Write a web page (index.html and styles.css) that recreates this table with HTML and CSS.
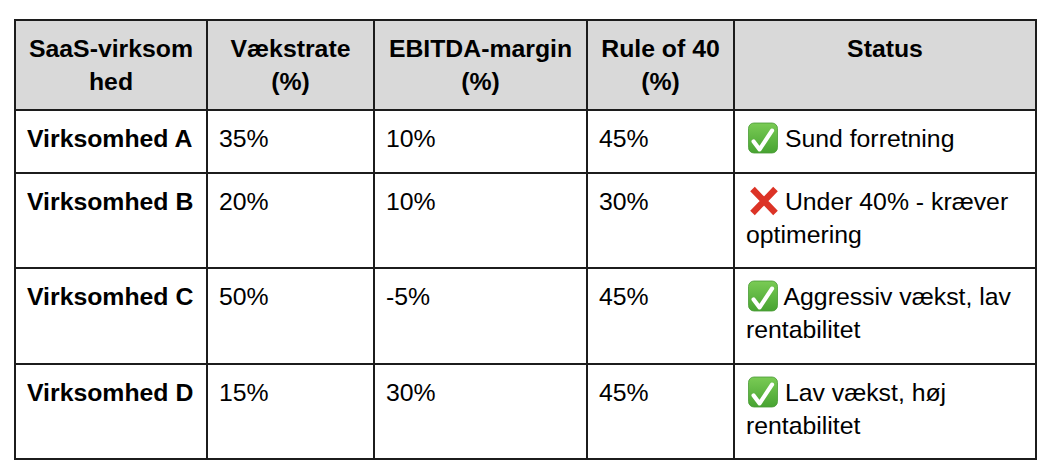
FILE: index.html
```html
<!DOCTYPE html>
<html lang="da">
<head>
<meta charset="utf-8">
<title>Rule of 40</title>
<link rel="stylesheet" href="styles.css">
</head>
<body>
<div class="page">
<table class="grid">
  <colgroup>
    <col class="c-name">
    <col class="c-growth">
    <col class="c-ebitda">
    <col class="c-rule">
    <col class="c-status">
  </colgroup>
  <thead>
    <tr>
      <th class="break">SaaS-virksomhed</th>
      <th>Vækstrate (%)</th>
      <th>EBITDA-margin (%)</th>
      <th>Rule of 40 (%)</th>
      <th>Status</th>
    </tr>
  </thead>
  <tbody>
    <tr>
      <td class="name">Virksomhed A</td>
      <td>35%</td>
      <td>10%</td>
      <td>45%</td>
      <td><svg class="emoji" viewBox="0 0 32 32" width="32" height="32" aria-hidden="true"><defs><linearGradient id="g1" x1="0" y1="0" x2="0" y2="1"><stop offset="0" stop-color="#7acb55"/><stop offset="1" stop-color="#47a331"/></linearGradient></defs><rect x="2.5" y="1" width="29" height="30" rx="5.5" fill="url(#g1)" stroke="#4a9a36" stroke-width="0.8"/><path d="M7.6 19.4 L13.6 27.4 L26 8.6" fill="none" stroke="#fff" stroke-width="4.2" stroke-linecap="round" stroke-linejoin="round"/></svg> Sund forretning</td>
    </tr>
    <tr>
      <td class="name">Virksomhed B</td>
      <td>20%</td>
      <td>10%</td>
      <td>30%</td>
      <td><svg class="emoji" viewBox="0 0 32 32" width="32" height="32" aria-hidden="true"><path d="M6.5 4 L29.5 28 M29.5 4 L6.5 28" fill="none" stroke="#dc3326" stroke-width="6.4" stroke-linecap="butt"/></svg> Under 40% - kræver optimering</td>
    </tr>
    <tr>
      <td class="name">Virksomhed C</td>
      <td>50%</td>
      <td>-5%</td>
      <td>45%</td>
      <td><svg class="emoji" viewBox="0 0 32 32" width="32" height="32" aria-hidden="true"><defs><linearGradient id="g2" x1="0" y1="0" x2="0" y2="1"><stop offset="0" stop-color="#7acb55"/><stop offset="1" stop-color="#47a331"/></linearGradient></defs><rect x="2.5" y="1" width="29" height="30" rx="5.5" fill="url(#g2)" stroke="#4a9a36" stroke-width="0.8"/><path d="M7.6 19.4 L13.6 27.4 L26 8.6" fill="none" stroke="#fff" stroke-width="4.2" stroke-linecap="round" stroke-linejoin="round"/></svg> Aggressiv vækst, lav rentabilitet</td>
    </tr>
    <tr>
      <td class="name">Virksomhed D</td>
      <td>15%</td>
      <td>30%</td>
      <td>45%</td>
      <td><svg class="emoji" viewBox="0 0 32 32" width="32" height="32" aria-hidden="true"><defs><linearGradient id="g3" x1="0" y1="0" x2="0" y2="1"><stop offset="0" stop-color="#7acb55"/><stop offset="1" stop-color="#47a331"/></linearGradient></defs><rect x="2.5" y="1" width="29" height="30" rx="5.5" fill="url(#g3)" stroke="#4a9a36" stroke-width="0.8"/><path d="M7.6 19.4 L13.6 27.4 L26 8.6" fill="none" stroke="#fff" stroke-width="4.2" stroke-linecap="round" stroke-linejoin="round"/></svg> Lav vækst, høj rentabilitet</td>
    </tr>
  </tbody>
</table>
</div>
</body>
</html>
```

FILE: styles.css
```css
html, body {
  margin: 0;
  padding: 0;
  background: #ffffff;
}

.page {
  padding: 19px 0 0 14px;
  font-family: "Liberation Sans", Arial, sans-serif;
  color: #000;
}

.grid {
  border-collapse: collapse;
  table-layout: fixed;
  width: 1023px;
  font-size: 24.8px;
  line-height: 33px;
}

.c-name { width: 192px; }
.c-growth { width: 167px; }
.c-ebitda { width: 213px; }
.c-rule { width: 147px; }
.c-status { width: 302px; }

.grid th,
.grid td {
  border: 2px solid #1c1c1c;
  vertical-align: top;
  padding: 11px 11px 16.5px 11px;
  text-align: left;
}

.grid th {
  background: #d9d9d9;
  font-weight: bold;
  text-align: center;
  padding-bottom: 11px;
}

.grid th.break {
  word-break: break-all;
}

.grid td.name {
  font-weight: bold;
}

.emoji {
  vertical-align: -7px;
}
```
